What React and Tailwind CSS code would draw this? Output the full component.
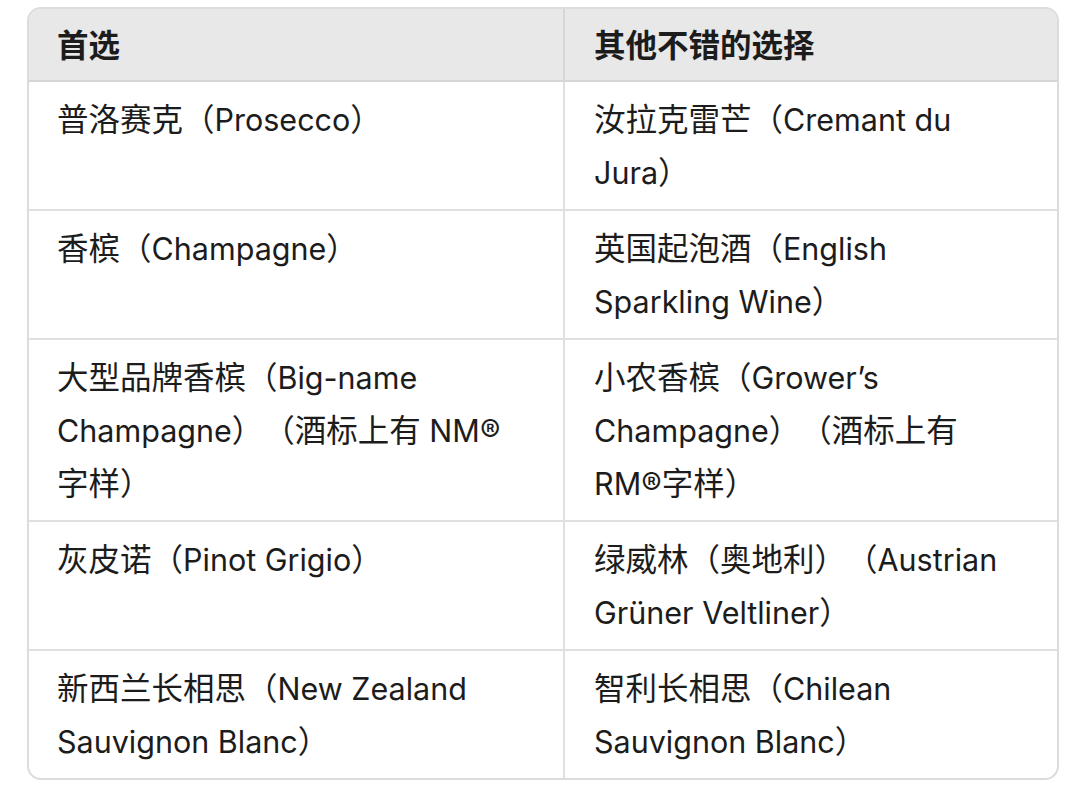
import React from "react";

const rows = [
  [["普洛赛克（Prosecco）"], ["汝拉克雷芒（Cremant du", "Jura）"]],
  [["香槟（Champagne）"], ["英国起泡酒（English", "Sparkling Wine）"]],
  [
    ["大型品牌香槟（Big-name", "Champagne）（酒标上有 NM®", "字样）"],
    ["小农香槟（Grower’s", "Champagne）（酒标上有", "RM®字样）"],
  ],
  [["灰皮诺（Pinot Grigio）"], ["绿威林（奥地利）（Austrian", "Grüner Veltliner）"]],
  [["新西兰长相思（New Zealand", "Sauvignon Blanc）"], ["智利长相思（Chilean", "Sauvignon Blanc）"]],
];

const CJK = /([\u3000-\u303f\u4e00-\u9fff\uff00-\uffef]+)/;

function Mixed({ text }) {
  return text.split(CJK).map((part, i) =>
    CJK.test(part) ? (
      <span key={i} className="text-[31.5px]">
        {part}
      </span>
    ) : (
      <React.Fragment key={i}>{part}</React.Fragment>
    )
  );
}

function Lines({ lines }) {
  return lines.map((l, i) => (
    <div key={i} className="whitespace-nowrap">
      <Mixed text={l} />
    </div>
  ));
}

export default function App() {
  return (
    <div className="w-[1080px] h-[789px] bg-white pt-[7px] pl-[27px]">
      <div
        className="w-[1032px] border-2 border-[#dcdcdc] rounded-[14px] overflow-hidden text-[#1c1c1c] text-[30.5px] leading-[53px] [text-spacing-trim:space-all]"
        style={{ fontFamily: '"Inter", "Noto Sans CJK SC", sans-serif' }}
      >
        <div className="grid grid-cols-[536px_1fr]">
          <div className="bg-[#e8e8e8] border-r-2 border-b-2 border-[#d6d6d6] pl-[28px] pt-[10px] pb-[8px] font-semibold">
            <Mixed text="首选" />
          </div>
          <div className="bg-[#e8e8e8] border-b-2 border-[#d6d6d6] pl-[29px] pt-[10px] pb-[8px] font-semibold">
            <Mixed text="其他不错的选择" />
          </div>
          {rows.map((r, i) => (
            <React.Fragment key={i}>
              <div
                className={`border-r-2 border-[#e0e0e0] pl-[28px] pt-[11px] pb-[10px] ${
                  i < rows.length - 1 ? "border-b-2" : ""
                }`}
              >
                <Lines lines={r[0]} />
              </div>
              <div
                className={`border-[#e0e0e0] pl-[29px] pt-[11px] pb-[10px] ${
                  i < rows.length - 1 ? "border-b-2" : ""
                }`}
              >
                <Lines lines={r[1]} />
              </div>
            </React.Fragment>
          ))}
        </div>
      </div>
    </div>
  );
}
